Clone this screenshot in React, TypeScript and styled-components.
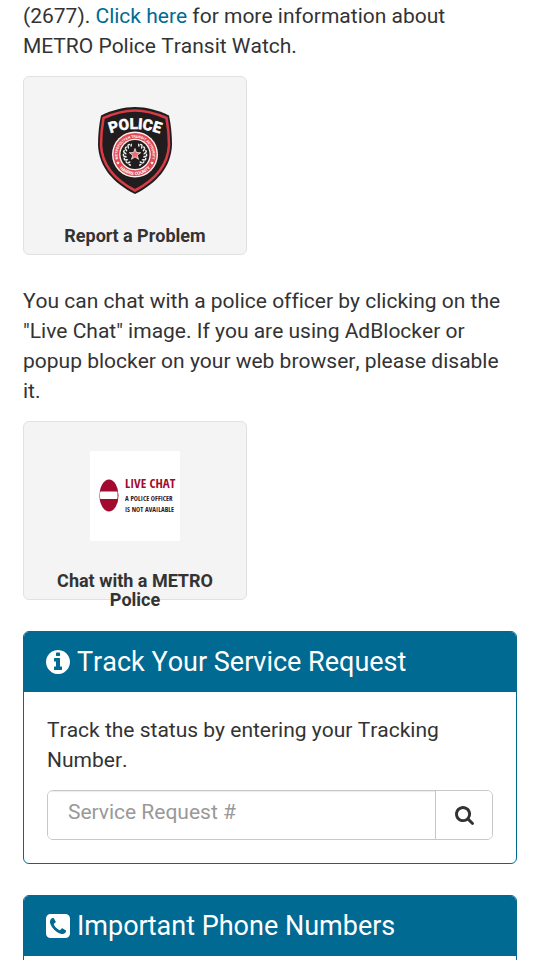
import React from "react";
import styled, { createGlobalStyle } from "styled-components";

const GlobalStyle = createGlobalStyle`
  *, *::before, *::after { box-sizing: border-box; }
  body {
    margin: 0;
    background: #fff;
    color: #333;
    font-family: Roboto, "Liberation Sans", sans-serif;
    font-size: 21px;
    line-height: 30px;
    font-kerning: none;
    font-variant-ligatures: none;
  }
`;

const Page = styled.main`
  height: 100vh;
  overflow: hidden;
  padding: 1px 23px 0;
`;

const Paragraph = styled.p`
  margin: 0 0 15px;
`;

const FieldLabel = styled.label`
  display: block;
  margin-bottom: 15px;
`;

const TextLink = styled.a`
  color: #006a93;
  text-decoration: none;
`;

const Tile = styled.a`
  display: flex;
  flex-direction: column;
  align-items: center;
  gap: 30px;
  width: 224px;
  height: 179px;
  margin-bottom: 31px;
  padding: 29px 22px 0;
  border: 1px solid #e1e1e1;
  border-radius: 6px;
  background: #f4f4f4;
  color: #333;
  text-decoration: none;

  > svg { flex: none; }
`;

const TileLabel = styled.span`
  font-size: 18px;
  font-weight: 700;
  line-height: 19px;
  text-align: center;
`;

const Panel = styled.section`
  margin-bottom: 31px;
  border: 1px solid #006a93;
  border-radius: 6px;
  overflow: hidden;
`;

const PanelTitle = styled.h2`
  display: flex;
  align-items: center;
  gap: 7px;
  margin: 0;
  padding: 15px 22px;
  background: #006a93;
  color: #fff;
  font-size: 27px;
  font-weight: 400;
  line-height: 30px;
`;

const PanelBody = styled.div`
  padding: 23px;
`;

const SearchForm = styled.form`
  display: flex;
  height: 50px;
  border: 1px solid #c8c8c8;
  border-radius: 6px;
  overflow: hidden;
`;

const SearchInput = styled.input`
  flex: 1;
  min-width: 0;
  padding: 0 20px 6px;
  border: 0;
  background: #fff;
  color: #555;
  font: inherit;
  font-kerning: none;
  box-shadow: inset 0 1px 1px rgba(0, 0, 0, 0.08);
  &::placeholder { color: #999; opacity: 1; }
`;

const SearchButton = styled.button`
  display: flex;
  align-items: center;
  justify-content: center;
  width: 57px;
  padding: 0;
  border: 0;
  border-left: 1px solid #c8c8c8;
  background: #fff;
  color: #333;
`;

const GLYPHS = {
  info: "M1024 1376v-160q0-14-9-23t-23-9h-96V672q0-14-9-23t-23-9H544q-14 0-23 9t-9 23v160q0 14 9 23t23 9h96v320h-96q-14 0-23 9t-9 23v160q0 14 9 23t23 9h448q14 0 23-9t9-23zM896 480V320q0-14-9-23t-23-9H672q-14 0-23 9t-9 23v160q0 14 9 23t23 9h192q14 0 23-9t9-23zm640 416q0 209-103 385.5T1153.5 1561 768 1664t-385.5-103T103 1281.5 0 896t103-385.5T382.5 231 768 128t385.5 103T1433 510.5 1536 896z",
  phone:
    "M1280 1193q0-11-2-16-3-8-38.5-29.5T1151 1098l-53-29q-5-3-19-13t-25-15-21-5q-18 0-47 32.5T929 1133.5 884 1166q-7 0-16.5-3.5t-15.5-6.5-17-9.5-14-8.5q-99-55-170-126.5T524 841q-2-3-8.5-14t-9.5-17-6.5-15.5T496 778q0-13 20.5-33.5t45-38.5 45-39.5T627 630q0-10-5-21t-15-25-13-19q-3-6-15-28.5t-25-45.5-26.5-47.5-25-40.5-16.5-18-16-2q-48 0-101 22-46 21-80 94.5T256 632q0 16 2.5 34t5 30.5 9 33 10 29.5T295 792t11 30q60 164 216.5 320.5T843 1359q6 2 30 11t33 12.5 29.5 10 33 9 30.5 5 34 2.5q57 0 130.5-34t94.5-80q22-53 22-102zM1536 416v960q0 119-84.5 203.5T1248 1664H288q-119 0-203.5-84.5T0 1376V416q0-119 84.5-203.5T288 128h960q119 0 203.5 84.5T1536 416z",
  search:
    "M1152 832q0-185-131.5-316.5T704 384 387.5 515.5 256 832t131.5 316.5T704 1280t316.5-131.5T1152 832zm512 832q0 54-37 91t-91 37q-54 0-90-38l-343-342q-179 124-399 124-143 0-273.5-55.5t-225-150-150-225T0 832t55.5-273.5 150-225 225-150T704 128t273.5 55.5 225 150 150 225T1408 832q0 220-124 399l343 343q37 37 37 90z",
};

const Glyph = ({ name, size }: { name: keyof typeof GLYPHS; size: number }) => (
  <svg
    width={size}
    height={size}
    viewBox={name === "search" ? "0 128 1664 1664" : "0 128 1536 1536"}
    fill="currentColor"
    aria-hidden="true"
  >
    <path d={GLYPHS[name]} />
  </svg>
);

const starPoints = (cx: number, cy: number, r: number) =>
  Array.from({ length: 10 }, (_, i) => {
    const radius = i % 2 ? r * 0.4 : r;
    const angle = (i * Math.PI) / 5 - Math.PI / 2;
    return `${(cx + radius * Math.cos(angle)).toFixed(2)},${(cy + radius * Math.sin(angle)).toFixed(2)}`;
  }).join(" ");

const LEAF_ANGLES = [-62, -42, -22, -2, 18, 38, 58];

const PoliceBadge = () => (
  <svg width="90" height="90" viewBox="0 0 90 90" aria-hidden="true">
    <defs>
      <path id="policeArc" d="M12 31Q45 15 78 31" />
      <path id="sealTop" d="M28.500 55A17.500 17.500 0 1 1 61.500 55" />
      <path id="sealBottom" d="M25 53A20.500 20.500 0 0 0 65 53" />
    </defs>
    <path
      d="M45 1C34 1 22 4 11 9.500C9 19 8 29 8 39C9 61 23 77 45 88C67 77 81 61 82 39C82 29 81 19 79 9.500C68 4 56 1 45 1Z"
      fill="#211d1e"
    />
    <path
      d="M45 4.500C35 4.500 24 7.500 13.500 12C12 20 11 30 11 39C12 59 25 74 45 84.500C65 74 78 59 79 39C79 30 78 20 76.500 12C66 7.500 55 4.500 45 4.500Z"
      fill="#211d1e"
      stroke="#d83a46"
      strokeWidth="2.600"
    />
    <text fill="#fff" fontFamily="Roboto, sans-serif" fontSize="15" fontWeight="700" stroke="#fff" strokeWidth="0.600" textAnchor="middle">
      <textPath href="#policeArc" startOffset="50%">POLICE</textPath>
    </text>
    <circle cx="45" cy="48.500" r="23" fill="#fff0ed" />
    <circle cx="45" cy="48.500" r="21.600" fill="#e04a54" />
    <g fill="#fff" fontFamily="Roboto, sans-serif" fontWeight="700" textAnchor="middle">
      <text fontSize="3.500">
        <textPath href="#sealTop" startOffset="50%">METROPOLITAN TRANSIT AUTHORITY</textPath>
      </text>
      <text fontSize="4.500">
        <textPath href="#sealBottom" startOffset="50%">HARRIS COUNTY</textPath>
      </text>
    </g>
    <polygon points={starPoints(28, 57, 2)} fill="#fff" />
    <polygon points={starPoints(62, 57, 2)} fill="#fff" />
    <circle cx="45" cy="48.500" r="15.800" fill="#fff0ed" />
    <circle cx="45" cy="48.500" r="14.500" fill="#211d1e" />
    {LEAF_ANGLES.map((a) => (
      <g key={a} fill="#eef0ee">
        <g transform={`rotate(${a} 45 48.5)`}>
          <ellipse cx="55" cy="47.500" rx="1.800" ry="0.800" transform="rotate(-35 55 47.5)" />
          <ellipse cx="56.500" cy="49.500" rx="0.800" ry="1.500" />
        </g>
        <g transform={`rotate(${-a} 45 48.5)`}>
          <ellipse cx="35" cy="47.500" rx="1.800" ry="0.800" transform="rotate(35 35 47.5)" />
          <ellipse cx="33.500" cy="49.500" rx="0.800" ry="1.500" />
        </g>
      </g>
    ))}
    <polygon points={starPoints(45, 48.5, 6)} fill="#ef6a6a" stroke="#fff" strokeWidth="0.700" />
  </svg>
);

const LiveChatSign = () => (
  <svg width="90" height="90" viewBox="0 0 90 90" aria-hidden="true">
    <rect width="90" height="90" fill="#fff" />
    <ellipse cx="19" cy="44.500" rx="9.500" ry="16" fill="#a20b2f" />
    <rect x="10" y="40.500" width="17.500" height="7.500" rx="1" fill="#fff" />
    <g fontFamily="'Open Sans Condensed', 'Open Sans', Roboto, sans-serif" fontWeight="300">
      <text x="35" y="37" fontSize="13" fill="#a20b2f">LIVE CHAT</text>
      <text x="35" y="50" fontSize="7" fill="#35101c">A POLICE OFFICER</text>
      <text x="35" y="61" fontSize="7" fill="#35101c">IS NOT AVAILABLE</text>
    </g>
  </svg>
);

export default function App() {
  return (
    <>
      <GlobalStyle />
      <Page>
        <Paragraph>
          (2677). <TextLink href="#transit-watch">Click here</TextLink> for more information about METRO Police Transit
          Watch.
        </Paragraph>
        <Tile href="#report">
          <PoliceBadge />
          <TileLabel>Report a Problem</TileLabel>
        </Tile>
        <Paragraph>
          You can chat with a police officer by clicking on the "Live Chat" image. If you are using AdBlocker or popup
          blocker on your web browser, please disable it.
        </Paragraph>
        <Tile href="#chat">
          <LiveChatSign />
          <TileLabel>Chat with a METRO Police</TileLabel>
        </Tile>
        <Panel>
          <PanelTitle>
            <Glyph name="info" size={24} />
            Track Your Service Request
          </PanelTitle>
          <PanelBody>
            <FieldLabel htmlFor="service-request">Track the status by entering your Tracking Number.</FieldLabel>
            <SearchForm onSubmit={(e) => e.preventDefault()}>
              <SearchInput id="service-request" type="text" placeholder="Service Request #" />
              <SearchButton type="submit" aria-label="Search">
                <Glyph name="search" size={19} />
              </SearchButton>
            </SearchForm>
          </PanelBody>
        </Panel>
        <Panel>
          <PanelTitle>
            <Glyph name="phone" size={24} />
            Important Phone Numbers
          </PanelTitle>
          <PanelBody />
        </Panel>
      </Page>
    </>
  );
}
